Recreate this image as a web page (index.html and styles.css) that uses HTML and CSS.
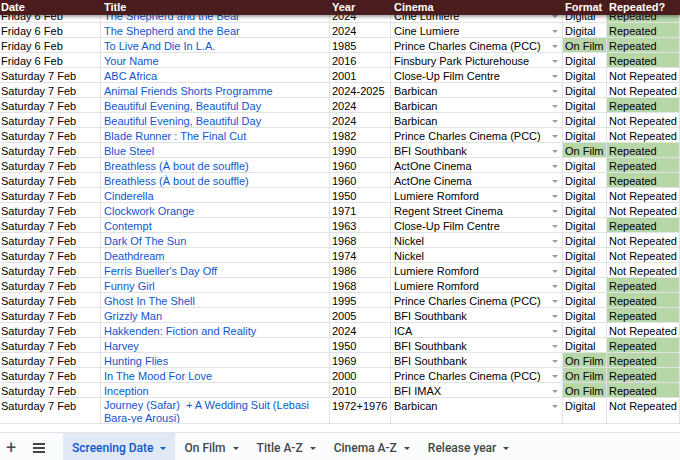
FILE: index.html
```html
<!DOCTYPE html>
<html>
<head>
<meta charset="utf-8">
<link rel="stylesheet" href="styles.css">
</head>
<body>
<div class="app">
  <div class="head row">
    <div class="c d">Date</div><div class="c t">Title</div><div class="c">Year</div><div class="c cin">Cinema</div><div class="c">Format</div><div class="c">Repeated?</div>
  </div>
  <div class="grid">
    <div class="rows">
      <div class="row"><div class="c d">Friday 6 Feb</div><div class="c t">The Shepherd and the Bear</div><div class="c">2024</div><div class="c cin dd">Cine Lumiere</div><div class="c">Digital</div><div class="c g">Repeated</div></div>
      <div class="row"><div class="c d">Friday 6 Feb</div><div class="c t">The Shepherd and the Bear</div><div class="c">2024</div><div class="c cin dd">Cine Lumiere</div><div class="c">Digital</div><div class="c g">Repeated</div></div>
      <div class="row"><div class="c d">Friday 6 Feb</div><div class="c t">To Live And Die In L.A.</div><div class="c">1985</div><div class="c cin dd">Prince Charles Cinema (PCC)</div><div class="c g">On Film</div><div class="c g">Repeated</div></div>
      <div class="row"><div class="c d">Friday 6 Feb</div><div class="c t">Your Name</div><div class="c">2016</div><div class="c cin dd">Finsbury Park Picturehouse</div><div class="c">Digital</div><div class="c g">Repeated</div></div>
      <div class="row"><div class="c d">Saturday 7 Feb</div><div class="c t">ABC Africa</div><div class="c">2001</div><div class="c cin dd">Close-Up Film Centre</div><div class="c">Digital</div><div class="c">Not Repeated</div></div>
      <div class="row"><div class="c d">Saturday 7 Feb</div><div class="c t">Animal Friends Shorts Programme</div><div class="c">2024-2025</div><div class="c cin dd">Barbican</div><div class="c">Digital</div><div class="c">Not Repeated</div></div>
      <div class="row"><div class="c d">Saturday 7 Feb</div><div class="c t">Beautiful Evening, Beautiful Day</div><div class="c">2024</div><div class="c cin dd">Barbican</div><div class="c">Digital</div><div class="c g">Repeated</div></div>
      <div class="row"><div class="c d">Saturday 7 Feb</div><div class="c t">Beautiful Evening, Beautiful Day</div><div class="c">2024</div><div class="c cin dd">Barbican</div><div class="c">Digital</div><div class="c">Not Repeated</div></div>
      <div class="row"><div class="c d">Saturday 7 Feb</div><div class="c t">Blade Runner : The Final Cut</div><div class="c">1982</div><div class="c cin dd">Prince Charles Cinema (PCC)</div><div class="c">Digital</div><div class="c">Not Repeated</div></div>
      <div class="row"><div class="c d">Saturday 7 Feb</div><div class="c t">Blue Steel</div><div class="c">1990</div><div class="c cin dd">BFI Southbank</div><div class="c g">On Film</div><div class="c g">Repeated</div></div>
      <div class="row"><div class="c d">Saturday 7 Feb</div><div class="c t">Breathless (À bout de souffle)</div><div class="c">1960</div><div class="c cin dd">ActOne Cinema</div><div class="c">Digital</div><div class="c g">Repeated</div></div>
      <div class="row"><div class="c d">Saturday 7 Feb</div><div class="c t">Breathless (À bout de souffle)</div><div class="c">1960</div><div class="c cin dd">ActOne Cinema</div><div class="c">Digital</div><div class="c g">Repeated</div></div>
      <div class="row"><div class="c d">Saturday 7 Feb</div><div class="c t">Cinderella</div><div class="c">1950</div><div class="c cin dd">Lumiere Romford</div><div class="c">Digital</div><div class="c">Not Repeated</div></div>
      <div class="row"><div class="c d">Saturday 7 Feb</div><div class="c t">Clockwork Orange</div><div class="c">1971</div><div class="c cin dd">Regent Street Cinema</div><div class="c">Digital</div><div class="c">Not Repeated</div></div>
      <div class="row"><div class="c d">Saturday 7 Feb</div><div class="c t">Contempt</div><div class="c">1963</div><div class="c cin dd">Close-Up Film Centre</div><div class="c">Digital</div><div class="c g">Repeated</div></div>
      <div class="row"><div class="c d">Saturday 7 Feb</div><div class="c t">Dark Of The Sun</div><div class="c">1968</div><div class="c cin dd">Nickel</div><div class="c">Digital</div><div class="c">Not Repeated</div></div>
      <div class="row"><div class="c d">Saturday 7 Feb</div><div class="c t">Deathdream</div><div class="c">1974</div><div class="c cin dd">Nickel</div><div class="c">Digital</div><div class="c">Not Repeated</div></div>
      <div class="row"><div class="c d">Saturday 7 Feb</div><div class="c t">Ferris Bueller's Day Off</div><div class="c">1986</div><div class="c cin dd">Lumiere Romford</div><div class="c">Digital</div><div class="c">Not Repeated</div></div>
      <div class="row"><div class="c d">Saturday 7 Feb</div><div class="c t">Funny Girl</div><div class="c">1968</div><div class="c cin dd">Lumiere Romford</div><div class="c">Digital</div><div class="c g">Repeated</div></div>
      <div class="row"><div class="c d">Saturday 7 Feb</div><div class="c t">Ghost In The Shell</div><div class="c">1995</div><div class="c cin dd">Prince Charles Cinema (PCC)</div><div class="c">Digital</div><div class="c g">Repeated</div></div>
      <div class="row"><div class="c d">Saturday 7 Feb</div><div class="c t">Grizzly Man</div><div class="c">2005</div><div class="c cin dd">BFI Southbank</div><div class="c">Digital</div><div class="c g">Repeated</div></div>
      <div class="row"><div class="c d">Saturday 7 Feb</div><div class="c t">Hakkenden: Fiction and Reality</div><div class="c">2024</div><div class="c cin dd">ICA</div><div class="c">Digital</div><div class="c">Not Repeated</div></div>
      <div class="row"><div class="c d">Saturday 7 Feb</div><div class="c t">Harvey</div><div class="c">1950</div><div class="c cin dd">BFI Southbank</div><div class="c">Digital</div><div class="c g">Repeated</div></div>
      <div class="row"><div class="c d">Saturday 7 Feb</div><div class="c t">Hunting Flies</div><div class="c">1969</div><div class="c cin dd">BFI Southbank</div><div class="c g">On Film</div><div class="c g">Repeated</div></div>
      <div class="row"><div class="c d">Saturday 7 Feb</div><div class="c t">In The Mood For Love</div><div class="c">2000</div><div class="c cin dd">Prince Charles Cinema (PCC)</div><div class="c g">On Film</div><div class="c g">Repeated</div></div>
      <div class="row"><div class="c d">Saturday 7 Feb</div><div class="c t">Inception</div><div class="c">2010</div><div class="c cin dd">BFI IMAX</div><div class="c g">On Film</div><div class="c g">Repeated</div></div>
      <div class="row tall"><div class="c d">Saturday 7 Feb</div><div class="c t wrap">Journey (Safar)&nbsp; + A Wedding Suit (Lebasi Bara-ye Arousi)</div><div class="c">1972+1976</div><div class="c cin dd">Barbican</div><div class="c">Digital</div><div class="c">Not Repeated</div></div>
    </div>
  </div>
  <div class="tabs">
    <div class="tool plus">+</div>
    <div class="tool menu"><span></span><span></span><span></span></div>
    <div class="tab active">Screening Date<span class="caret"></span></div>
    <div class="tab">On Film<span class="caret"></span></div>
    <div class="tab">Title A-Z<span class="caret"></span></div>
    <div class="tab">Cinema A-Z<span class="caret"></span></div>
    <div class="tab">Release year<span class="caret"></span></div>
  </div>
</div>
</body>
</html>
```
FILE: styles.css
```css
* { box-sizing: border-box; }
html, body { margin: 0; padding: 0; background: #fff; }
body { width: 680px; height: 460px; overflow: hidden; font-family: "Liberation Sans", Arial, sans-serif; font-size: 11px; color: #000; }
.app { display: flex; flex-direction: column; height: 460px; }

.row { display: grid; grid-template-columns: 101px 229px 61px 172px 44px 73px; height: 15px; border-bottom: 1px solid #e2e3e3; }
.c { border-right: 1px solid #e2e3e3; padding: 1px 0 0 2px; line-height: 14px; white-space: nowrap; overflow: hidden; }
.c.d { padding-left: 1px; }
.c.t { padding-left: 3px; color: #1155cc; }
.c.cin { padding-left: 3px; position: relative; }
.c.g { background: #b7d7a8; }
.dd::after { content: ""; position: absolute; right: 4px; top: 7px; border-left: 3px solid transparent; border-right: 3px solid transparent; border-top: 3px solid #9a9a9a; }

.head { position: relative; z-index: 2; background: #4a1c1d; color: #fff; font-weight: bold; border-bottom: none; box-shadow: 0 2px 3px rgba(0,0,0,0.35); flex: none; }
.head .c { border-right: 1px solid #4a1c1d; color: #fff; padding-top: 0; }

.grid { height: 417px; overflow: hidden; flex: none; }
.rows { margin-top: -7px; }
.row.tall { height: 26px; }
.wrap { white-space: normal; }
.tall .c.wrap { line-height: 12.5px; padding-top: 1px; }

.tabs { flex: none; height: 28px; margin-top: auto; background: #f9fbfd; border-top: 1px solid #e1e3e6; display: flex; align-items: stretch; font-family: Roboto, "Liberation Sans", sans-serif; font-size: 12px; font-weight: 500; color: #444746; }
.tool { display: flex; align-items: center; justify-content: center; color: #444746; padding-top: 2px; }
.plus { width: 22px; font-size: 18px; font-weight: 400; }
.menu { width: 34px; flex-direction: column; gap: 2.5px; padding-top: 3px; }
.menu span { display: block; width: 12px; height: 1.5px; background: #444746; }
.tab { display: flex; align-items: center; padding: 3px 9px 0; white-space: nowrap; }
.tab.active { background: #e1e9f7; color: #0b57d0; margin-left: 7px; }
.caret { display: inline-block; margin-left: 7px; border-left: 3.5px solid transparent; border-right: 3.5px solid transparent; border-top: 3.5px solid currentColor; }
```
